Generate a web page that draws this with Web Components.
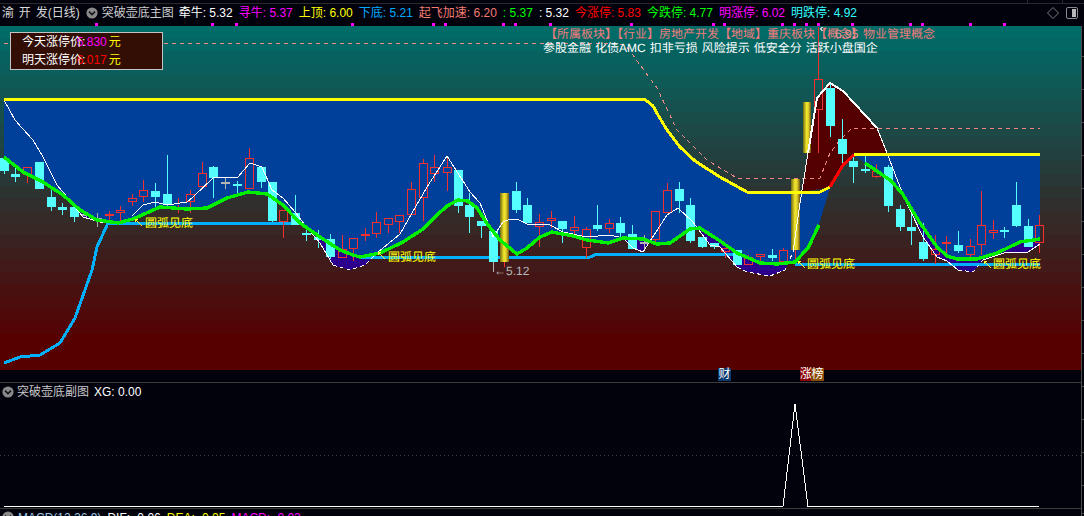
<!DOCTYPE html>
<html lang="zh">
<head>
<meta charset="utf-8">
<title>突破壶底</title>
<style>
html, body { margin: 0; padding: 0; background: #02020c; overflow: hidden; }
body { font: 12px "Liberation Sans", "Noto Sans CJK SC", sans-serif; }
</style>
</head>
<body>
<stock-terminal></stock-terminal>

<script>
const FONT = `"Liberation Sans", "Noto Sans CJK SC", sans-serif`;
const NS = "http://www.w3.org/2000/svg";

// x, wick top, body top, body bottom, wick bottom, kind (r red, c cyan, g grey)
const CANDLES = [
  [4,156,158,171,174,"c"],[15,168,174,177,182,"c"],[27,167,167,175,183,"r"],[39,162,162,189,189,"c"],
  [51,190,197,207,211,"c"],[62,203,207,210,215,"c"],[74,205,207,217,222,"c"],[86,212,215,215,218,"g"],
  [97,213,219,219,227,"g"],[109,211,214,216,220,"r"],[120,206,210,213,222,"r"],[132,194,198,202,206,"r"],
  [143,180,190,197,202,"r"],[155,183,191,197,208,"c"],[167,155,194,205,207,"c"],[178,198,204,205,213,"r"],
  [190,190,194,202,213,"r"],[202,162,173,187,187,"r"],[213,166,167,178,198,"c"],[225,177,183,183,189,"g"],
  [237,181,185,185,193,"c"],[249,148,158,189,189,"r"],[261,167,167,182,188,"c"],[272,182,182,221,222,"c"],
  [283,210,210,222,238,"r"],[295,195,213,225,225,"c"],[306,229,234,234,241,"c"],[318,230,237,240,248,"c"],
  [330,234,239,257,259,"c"],[342,235,249,258,258,"r"],[353,238,238,249,261,"r"],[365,228,235,235,241,"r"],
  [376,212,222,234,238,"r"],[388,218,218,225,233,"r"],[399,215,215,222,233,"r"],[411,182,189,215,215,"r"],
  [423,159,163,198,221,"r"],[434,155,167,174,182,"r"],[447,158,167,173,191,"r"],[458,170,170,206,213,"c"],
  [469,193,205,217,233,"c"],[481,221,221,226,238,"c"],[493,231,231,262,262,"c"],[504,230,230,262,267,"r"],
  [516,182,191,210,213,"c"],[527,198,205,223,223,"c"],[539,214,222,227,247,"r"],[551,211,218,221,228,"r"],
  [562,221,221,229,243,"c"],[574,216,227,231,236,"r"],[586,227,229,248,258,"r"],[597,205,225,229,231,"c"],
  [609,219,223,229,233,"r"],[620,217,223,233,237,"c"],[632,225,234,249,249,"c"],[644,235,243,243,250,"g"],
  [655,211,211,240,243,"r"],[667,183,190,213,213,"r"],[679,182,189,201,213,"c"],[690,198,205,241,243,"c"],
  [702,237,237,247,248,"c"],[714,243,243,247,249,"c"],[725,248,248,252,258,"r"],[737,250,250,265,265,"c"],
  [748,255,257,265,265,"r"],[760,254,254,257,261,"r"],[772,249,255,258,261,"c"],[783,248,250,262,262,"r"],
  [795,240,245,250,260,"r"],[818,27,79,110,153,"r"],[830,83,88,126,137,"c"],[842,119,139,154,168,"c"],
  [853,157,161,167,183,"c"],[865,153,170,170,173,"c"],[876,164,171,177,178,"r"],[888,165,167,206,212,"c"],
  [900,205,209,227,231,"c"],[911,214,227,231,245,"c"],[923,223,242,259,261,"c"],[935,235,249,255,264,"r"],
  [946,236,243,243,254,"r"],[958,231,245,251,253,"c"],[970,239,246,255,258,"r"],[981,191,225,245,255,"r"],
  [993,220,230,233,239,"r"],[1004,227,230,232,238,"c"],[1016,182,205,226,227,"c"],[1028,219,226,247,247,"c"],
  [1039,215,225,243,253,"r"]
];

const YELLOW_A = [[4,99.5],[645,99.5],[653,106],[658,115],[667,130],[680,147],[695,161],[720,177],[747,192],[820,192],[830,187]];
const RED_SEG = [[830,187],[843,165],[854,155]];
const YELLOW_B = [[854,154],[1040,154]];

const GREEN_A = [[4,157],[23,172],[43,182],[63,195],[80,210],[97,220],[118,223],[133,219],[160,207],[187,209],[207,208],
  [227,198],[248,192],[267,194],[283,205],[300,223],[320,237],[340,250],[353,255],[360,257],[380,253],[403,242],[423,229],[437,215],
  [447,206],[458,200],[468,201],[477,208],[488,225],[500,240],[517,254],[527,248],[540,237],[552,232],[573,236],[587,240],[608,243],[623,238],[643,239],[657,244],
  [670,243],[690,229],[700,228],[720,241],[737,253],[760,263],[777,264],[795,262],[808,248],[819,225]];
const GREEN_B = [[865,163],[890,180],[902,193],[920,223],[937,247],[947,256],[957,259],[977,259],[997,253],[1020,242],[1040,239]];

const WHITE_1 = [[4,100],[15,120],[22,128],[33,140],[43,157],[57,185],[72,203],[83,217],[100,222],[113,223]];
const WHITE_2 = [[132,216],[143,205],[155,202],[167,205],[187,202],[193,197],[213,178],[238,177],[250,163],[262,167],[272,190],
  [283,198],[295,212],[305,225],[320,243],[333,265]];
const WHITE_DASH_1 = [[333,265],[350,270],[365,265],[377,253]];
const WHITE_3 = [[377,253],[400,234],[427,187],[447,156],[470,192],[480,203],[487,220],[493,237],[503,222],[510,219],[517,219],
  [527,224],[550,225],[563,232],[587,237],[610,235],[623,238],[633,248],[643,252],[667,215],[678,208],[693,222],[710,245],
  [720,247],[737,267]];
const WHITE_DASH_2 = [[737,267],[747,272],[770,276],[785,270],[793,252]];
const WHITE_4 = [[793,252],[800,203],[808,153],[817,98],[830,83],[843,91],[877,128],[887,153],[900,187],[910,210],[923,237],[937,257],[947,261],[958,270]];
const WHITE_DASH_3 = [[958,270],[973,272],[983,260]];
const WHITE_5 = [[983,260],[1007,252],[1028,252],[1040,244]];

const PINK = [[4,43],[618,43],[627,47],[657,88],[677,130],[707,160],[720,168],[737,178],[820,178],[830,153],[840,140],[852,128],[1040,128]];
const BLUE_CURVE = [[4,363],[20,357],[40,355],[60,343],[75,318],[85,290],[92,270],[97,247],[108,223]];
const BLUE_FLATS = [
  [[108,223],[302,223]],
  [[360,257],[590,257],[597,254],[737,254]],
  [[795,264],[1040,264]]
];
const TAGS = [[145,227,135,219],[388,261,378,252],[807,268,798,261],[993,268,984,261]];
const GOLD = [[500,193,9,69],[791,179,9,71],[803,102,8,51]];

function pts(list) { return list.map(p => p.join(",")).join(" "); }

function el(name, attrs, text) {
  const node = document.createElementNS(NS, name);
  for (const k in attrs) node.setAttribute(k, attrs[k]);
  if (text) node.textContent = text;
  return node;
}

class ChevronIcon extends HTMLElement {
  constructor() {
    super();
    this.attachShadow({ mode: "open" }).innerHTML = `
      <style>
        :host { display: inline-block; width: 12px; height: 12px; flex: none; white-space: normal; }
        svg { display: block; }
      </style>
      <svg width="12" height="12" viewBox="0 0 12 12">
        <circle cx="6" cy="6" r="5.6" fill="#8a8a8a"/>
        <path d="M3 4.6 L6 7.6 L9 4.6" fill="none" stroke="#15151c" stroke-width="1.6"/>
      </svg>`;
  }
}

class QuoteItem extends HTMLElement {
  constructor() {
    super();
    this.attachShadow({ mode: "open" }).innerHTML = `<style>:host { display: inline-block; flex: none; color: var(--c, #fff); } span { white-space: pre; }</style><span><slot></slot></span>`;
  }
  connectedCallback() {
    this.style.setProperty("--c", this.getAttribute("color") || "#fff");
  }
}

class QuoteBar extends HTMLElement {
  constructor() {
    super();
    const magenta = [96,212,236,352,433,445,503,515,550,631,713,724,782,794,806,818,852,910,922,970,1004];
    const marks = magenta.map(x => `<i style="left:${x - 1}px"></i>`).join("");
    this.attachShadow({ mode: "open" }).innerHTML = `
      <style>
        :host {
          display: flex; align-items: flex-start; height: 26px; padding: 6px 0 0 2px; box-sizing: border-box;
          position: relative; flex: none; color: #fff; line-height: 14px;
          background:
            linear-gradient(#2a2a2e, #2a2a2e) 0 3px / 100% 1px no-repeat,
            repeating-linear-gradient(90deg, transparent 0 11px, #2a2a2e 11px 12px, transparent 12px 35px) 1016px 0 / 100% 3px no-repeat,
            #02020c;
        }
        .name { word-spacing: 1.5px; margin-right: 6px; color: #d8d8d8; white-space: pre; }
        chevron-icon { margin-top: 1px; }
        .title { margin: 0 5px 0 4px; color: #ccc; white-space: pre; }
        .runs { display: flex; gap: 6px; }
        .tools { margin-left: auto; display: flex; align-items: center; gap: 7px; padding: 1px 6px 0 0; }
        .tools svg { display: block; }
        i { position: absolute; top: 23px; width: 3px; height: 3px; background: #ff00ff; }
      </style>
      <span class="name">渝 开 发(日线)</span>
      <chevron-icon></chevron-icon>
      <span class="title">突破壶底主图</span>
      <div class="runs"><slot></slot></div>
      <div class="tools">
        <svg width="12" height="12" viewBox="0 0 12 12"><path d="M6 .5 L11.5 6 L6 11.5 L.5 6 Z" fill="none" stroke="#7a7a7a"/></svg>
        <svg width="12" height="12" viewBox="0 0 12 12"><rect x="0.5" y="0.5" width="11" height="11" rx="1.5" fill="none" stroke="#8a8a8a"/><rect x="6" y="2" width="4" height="8" fill="#b8b8b8"/></svg>
      </div>
      ${marks}`;
  }
}

class KlineChart extends HTMLElement {
  constructor() {
    super();
    this.attachShadow({ mode: "open" }).innerHTML = `
      <style>
        :host { display: block; position: relative; height: 344px; flex: none; overflow: hidden; }
        svg { display: block; }
        text { font-family: ${FONT}; font-size: 12px; }
        .legend {
          position: absolute; left: 10px; top: 6px; width: 140px; height: 36px;
          background: #330e05; border: 1px solid #c4c4c4; color: #fff;
          display: flex; flex-direction: column; justify-content: center; padding-left: 11px; box-sizing: content-box;
          line-height: 18px;
        }
        .legend span { position: relative; z-index: 1; }
        .legend b { font-weight: normal; margin-left: -8.6px; }
        .legend em { font-style: normal; color: #ffff00; margin-left: 2px; }
      </style>
      <svg id="plot" width="1081" height="344" viewBox="0 26 1081 344" shape-rendering="crispEdges"></svg>
      <div class="legend">
        <div><span>今天涨停价:</span><b style="color:#ff00ff">5.830</b><em>元</em></div>
        <div><span>明天涨停价:</span><b style="color:#ff0000">6.017</b><em>元</em></div>
      </div>`;
  }

  connectedCallback() {
    const svg = this.shadowRoot.getElementById("plot");
    this.drawBackground(svg);
    this.drawFills(svg);
    this.line(svg, PINK, "#f08888", 1, "4 4");
    BLUE_FLATS.forEach(f => this.line(svg, f, "#00b0ff", 3));
    this.line(svg, BLUE_CURVE, "#00b0ff", 3);
    this.drawCandles(svg);
    this.drawGold(svg);
    [WHITE_1, WHITE_2, WHITE_3, WHITE_4, WHITE_5].forEach(l => this.line(svg, l, "#fff", 1));
    [WHITE_DASH_1, WHITE_DASH_2, WHITE_DASH_3].forEach(l => this.line(svg, l, "#fff", 1, "4 3"));
    this.line(svg, [[808,153],[817,98],[830,83],[843,91],[877,128]], "#fff", 2);
    this.line(svg, YELLOW_A, "#ffff00", 3);
    this.line(svg, YELLOW_B, "#ffff00", 3);
    this.line(svg, RED_SEG, "#ff0000", 3);
    this.line(svg, GREEN_A, "#00f000", 3.4);
    this.line(svg, GREEN_B, "#00f000", 3.4);
    this.drawText(svg);
  }

  line(svg, list, color, width, dash) {
    const attrs = { points: pts(list), fill: "none", stroke: color, "stroke-width": width };
    if (dash) attrs["stroke-dasharray"] = dash;
    svg.append(el("polyline", attrs));
  }

  drawBackground(svg) {
    // the terminal paints this gradient in visible bands
    const top = [0, 107, 103], bottom = [86, 0, 0], bands = 26, h = 320 / bands;
    for (let i = 0; i < bands; i++) {
      const t = i / (bands - 1);
      const c = top.map((v, n) => Math.round(v + (bottom[n] - v) * t));
      svg.append(el("rect", { x: 0, y: 26 + i * h, width: 1081, height: i === bands - 1 ? 344 - i * h : h + 1, fill: `rgb(${c})` }));
    }
  }

  drawFills(svg) {
    // maroon between the white peak and the yellow/red line
    const maroon = [[802,192],[808,153],[817,98],[830,83],[843,91],[877,128],[887,153],[854,155],[843,165],[830,187]];
    svg.append(el("polygon", { points: pts(maroon), fill: "#550000" }));
    // blue between the yellow line and the green line
    const blueA = YELLOW_A.concat(GREEN_A.slice().reverse());
    const blueB = [[854,155],[1040,155],...GREEN_B.slice().reverse()];
    svg.append(el("polygon", { points: pts(blueA), fill: "#00409a" }));
    svg.append(el("polygon", { points: pts(blueB), fill: "#00409a" }));
    // purple: below the green line and above the white line
    const defs = el("defs", {});
    const clip = el("clipPath", { id: "under-green" });
    clip.append(el("polygon", { points: pts([[4,370],...GREEN_A,[819,370]]) }));
    clip.append(el("polygon", { points: pts([[865,370],...GREEN_B,[1040,370]]) }));
    defs.append(clip);
    svg.append(defs);
    const white = [...WHITE_1, ...WHITE_2, ...WHITE_DASH_1, ...WHITE_3, ...WHITE_DASH_2, ...WHITE_4, ...WHITE_DASH_3, ...WHITE_5];
    svg.append(el("polygon", { points: pts([[4,26],...white,[1040,26]]), fill: "#2c008c", "clip-path": "url(#under-green)" }));
  }

  drawCandles(svg) {
    for (const [x, hi, top, bot, lo, kind] of CANDLES) {
      const color = { r: "#f23030", c: "#55ffff", g: "#b4b4b4" }[kind];
      const cx = x + 0.5, left = x - 4;
      if (top === bot) {
        svg.append(el("rect", { x: left, y: top - 1, width: 9, height: 2, fill: color }));
        svg.append(el("rect", { x: x, y: hi, width: 1, height: lo - hi, fill: color }));
        continue;
      }
      if (hi < top) svg.append(el("line", { x1: cx, x2: cx, y1: hi, y2: top, stroke: color }));
      if (lo > bot) svg.append(el("line", { x1: cx, x2: cx, y1: bot, y2: lo, stroke: color }));
      if (kind === "r") {
        svg.append(el("rect", { x: left + 0.5, y: top + 0.5, width: 8, height: bot - top - 1, fill: "none", stroke: color }));
      } else {
        svg.append(el("rect", { x: left, y: top, width: 9, height: bot - top, fill: color }));
      }
    }
  }

  drawGold(svg) {
    const defs = el("defs", {});
    const grad = el("linearGradient", { id: "gold", x1: 0, x2: 1, y1: 0, y2: 0 });
    [["0", "#6f6a14"], ["0.45", "#f6ea2c"], ["0.7", "#d8c82a"], ["1", "#6e5412"]].forEach(([o, c]) =>
      grad.append(el("stop", { offset: o, "stop-color": c })));
    defs.append(grad);
    svg.append(defs);
    GOLD.forEach(([x, y, w, h]) => svg.append(el("rect", { x, y, width: w, height: h, fill: "url(#gold)" })));
  }

  drawText(svg) {
    const g = el("g", { "text-rendering": "geometricPrecision" });
    g.append(el("text", { x: 545, y: 37.5, fill: "#f07c7c" }, "【所属板块】【行业】房地产开发【地域】重庆板块【概念】物业管理概念"));
    g.append(el("text", { x: 835, y: 37.5, fill: "#f09090" }, "6.95"));
    g.append(el("text", { x: 543, y: 51.5, fill: "#ffffff", "word-spacing": "0.7" }, "参股金融 化债AMC 扣非亏损 风险提示 低安全分 活跃小盘国企"));
    for (const [x, y, ax, ay] of TAGS) {
      g.append(el("text", { x, y, fill: "#ffff00" }, "圆弧见底"));
      g.append(el("path", { d: `M${ax} ${ay} L${ax + 7} ${ay + 7} M${ax} ${ay} h3 M${ax} ${ay} v3`, fill: "none", stroke: "#ffff33" }));
    }
    g.append(el("line", { x1: 493.5, x2: 493.5, y1: 262, y2: 272, stroke: "#b4b4b4" }));
    g.append(el("text", { x: 494, y: 275, fill: "#b8b8b8" }, "←5.12"));
    g.append(el("path", { d: "M823 27 L820 29 L823 31", fill: "none", stroke: "#c8c8c8" }));
    svg.append(g);
  }
}

class EventStrip extends HTMLElement {
  constructor() {
    super();
    this.attachShadow({ mode: "open" }).innerHTML = `
      <style>
        :host { display: flex; height: 12px; flex: none; padding-left: 718px; background: #02020c; color: #fff; overflow: visible; line-height: 13px; }
        span { display: block; height: 13px; text-align: center; font-size: 12px; position: relative; }
        .a { width: 13px; background: #0a3a6e; margin-right: 69px; margin-top: -2px; }
        .b { width: 11px; background: #8a0404; margin-top: -2px; }
        .c { width: 13px; background: #8a4c06; margin-top: -2px; }
      </style>
      <span class="a">财</span><span class="b">涨</span><span class="c">榜</span>`;
  }
}

class SubChart extends HTMLElement {
  constructor() {
    super();
    this.attachShadow({ mode: "open" }).innerHTML = `
      <style>
        :host { display: block; position: relative; height: 125px; flex: none; border-top: 1px solid #3c3c3c; background: #02020c; }
        .head { display: flex; align-items: center; gap: 3px; padding: 2px 0 0 2px; height: 14px; color: #c8c8c8; }
        .head span, .head b { white-space: pre; }
        .head b { font-weight: normal; color: #fff; margin-left: 2px; }
        svg { display: block; position: absolute; left: 0; top: 0; }
      </style>
      <svg width="1081" height="125" viewBox="0 383 1081 125" shape-rendering="crispEdges">
        <line x1="0" x2="1081" y1="455.5" y2="455.5" stroke="#3c3c40" stroke-dasharray="1 3"/>
        <polyline points="4,506.5 783,506.5 795,404 808,506.5 1039,506.5" fill="none" stroke="#fff" stroke-width="1"/>
      </svg>
      <div class="head"><chevron-icon></chevron-icon><span>突破壶底副图</span><b>XG: 0.00</b></div>`;
  }
}

class MacdHeader extends HTMLElement {
  constructor() {
    super();
    this.attachShadow({ mode: "open" }).innerHTML = `
      <style>
        :host { display: flex; align-items: flex-start; gap: 4px; flex: 1; padding: 2px 0 0 2px; border-top: 1px solid #3c3c3c; background: #02020c; overflow: hidden; line-height: 14px; min-height: 0; }
        .runs { display: flex; gap: 6px; margin-left: 0; }
      </style>
      <chevron-icon></chevron-icon>
      <div class="runs"><slot></slot></div>`;
  }
}

class StockTerminal extends HTMLElement {
  constructor() {
    super();
    this.attachShadow({ mode: "open" }).innerHTML = `
      <style>
        :host { display: flex; flex-direction: column; width: 1084px; height: 516px; overflow: hidden; font: 12px ${FONT}; line-height: 14px; color: #fff; background: #02020c; }
        .body { display: flex; flex: 1; min-height: 0; }
        .main { display: flex; flex-direction: column; width: 1081px; flex: none; min-height: 0; }
        .rail {
          flex: 1; border-left: 1px solid #4a4a4a; box-sizing: border-box;
          background: repeating-linear-gradient(#4a4a4a 0 1px, transparent 1px 33px) 0 -3px;
        }
      </style>
      <quote-bar>
        <quote-item>牵牛: 5.32</quote-item>
        <quote-item color="#ff00ff">寻牛: 5.37</quote-item>
        <quote-item color="#ffff00">上顶: 6.00</quote-item>
        <quote-item color="#00aaff">下底: 5.21</quote-item>
        <quote-item color="#f47c72">起飞加速: 6.20</quote-item>
        <quote-item color="#00ff00">: 5.37</quote-item>
        <quote-item>: 5.32</quote-item>
        <quote-item color="#ff0000">今涨停: 5.83</quote-item>
        <quote-item color="#00ff00">今跌停: 4.77</quote-item>
        <quote-item color="#ff00ff">明涨停: 6.02</quote-item>
        <quote-item color="#33ffff">明跌停: 4.92</quote-item>
      </quote-bar>
      <div class="body">
        <div class="main">
          <kline-chart></kline-chart>
          <event-strip></event-strip>
          <sub-chart></sub-chart>
          <macd-header>
            <quote-item color="#9cc4e4">MACD(12,26,9)</quote-item>
            <quote-item>DIF: -0.06</quote-item>
            <quote-item color="#ffff00">DEA: -0.05</quote-item>
            <quote-item color="#ff00ff">MACD: -0.02</quote-item>
          </macd-header>
        </div>
        <div class="rail"></div>
      </div>`;
  }
}

customElements.define("chevron-icon", ChevronIcon);
customElements.define("quote-item", QuoteItem);
customElements.define("quote-bar", QuoteBar);
customElements.define("kline-chart", KlineChart);
customElements.define("event-strip", EventStrip);
customElements.define("sub-chart", SubChart);
customElements.define("macd-header", MacdHeader);
customElements.define("stock-terminal", StockTerminal);
</script>
</body>
</html>
